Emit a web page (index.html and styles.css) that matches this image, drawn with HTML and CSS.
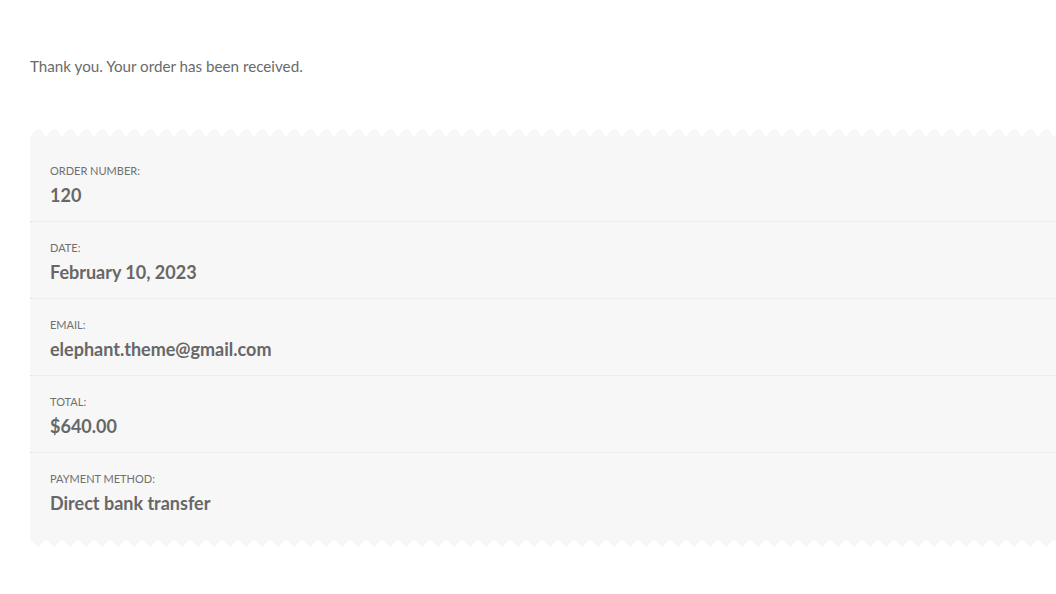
FILE: index.html
```html
<!DOCTYPE html>
<html lang="en">
<head>
<meta charset="utf-8">
<title>Order received</title>
<link rel="stylesheet" href="styles.css">
</head>
<body>
<main class="page">
  <p class="notice">Thank you. Your order has been received.</p>
  <section class="receipt">
    <div class="zig zig-top"></div>
    <ul class="overview">
      <li class="row"><span class="label">Order number:</span><strong class="value">120</strong></li>
      <li class="row"><span class="label">Date:</span><strong class="value">February 10, 2023</strong></li>
      <li class="row"><span class="label">Email:</span><strong class="value">elephant.theme@gmail.com</strong></li>
      <li class="row"><span class="label">Total:</span><strong class="value">$640.00</strong></li>
      <li class="row"><span class="label">Payment method:</span><strong class="value">Direct bank transfer</strong></li>
    </ul>
    <div class="zig zig-bottom"></div>
  </section>
</main>
</body>
</html>
```
FILE: styles.css
```css
html, body {
  margin: 0;
  padding: 0;
  background: #ffffff;
}
body {
  font-family: "Lato", "Open Sans", sans-serif;
  color: #6b6b6b;
  overflow: hidden;
}
.page {
  padding: 55px 0 0 30px;
}
.notice {
  margin: 0;
  font-size: 15.2px;
  line-height: 22px;
  color: #6a6a6a;
}
.receipt {
  margin-top: 51px;
  background: #f7f7f7;
}
.zig {
  height: 8px;
  background-color: #ffffff;
  background-size: 16px 8px;
  background-repeat: repeat-x;
}
.zig-top {
  background-image: conic-gradient(from 135deg at 50% 0, #f7f7f7 90deg, transparent 0);
  margin-bottom: 8px;
}
.zig-bottom {
  background-image: conic-gradient(from -45deg at 50% 100%, #f7f7f7 90deg, transparent 0);
  margin-top: 10px;
}
.overview {
  list-style: none;
  margin: 0;
  padding: 0;
}
.row {
  display: flex;
  flex-direction: column;
  padding: 17px 20px 13px;
  border-top: 1px dotted #e4e4e4;
}
.row:first-child {
  border-top: none;
  padding-top: 18px;
}
.label {
  font-size: 11px;
  line-height: 18px;
  text-transform: uppercase;
  color: #707070;
}
.value {
  margin-top: 2px;
  font-size: 18px;
  line-height: 26px;
  font-weight: 700;
  color: #676767;
}
```
